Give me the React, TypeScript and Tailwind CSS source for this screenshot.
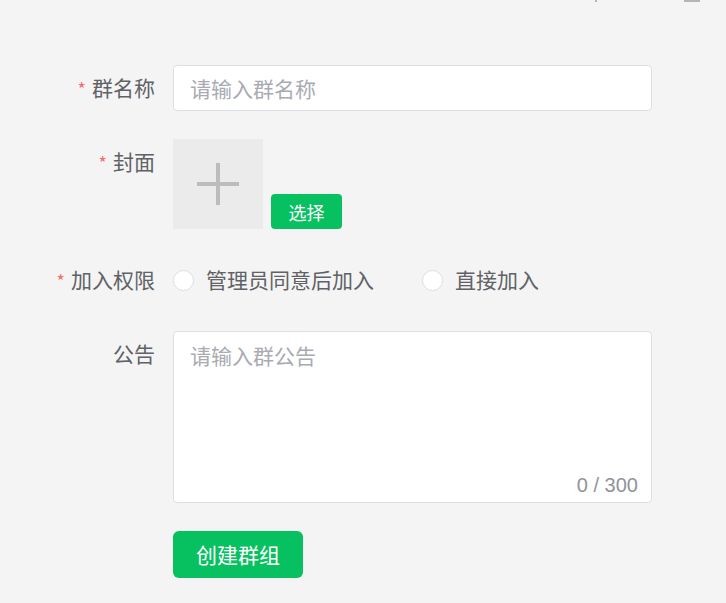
import { useState } from 'react';

const font = { fontFamily: '"Noto Sans CJK SC", "Liberation Sans", sans-serif' };

const Label = ({ text, required }: { text: string; required?: boolean }) => (
  <div className="w-[155px] shrink-0 h-[46px] flex items-center justify-end text-[21px] text-[#606266]">
    {required && <span className="text-[#f56c6c] mr-[6px] text-[18px]">*</span>}
    {text}
  </div>
);

export default function App() {
  const [name, setName] = useState('');
  const [notice, setNotice] = useState('');
  const [mode, setMode] = useState('');

  return (
    <div className="relative min-h-[603px] w-full bg-[#f4f4f4] pt-[65px]" style={font}>
      {/* cut-off header bits */}
      <div className="absolute top-0 left-[595px] w-[2px] h-[2px] bg-[#b5b5b5]" />
      <div className="absolute top-0 left-[684px] w-[16px] h-[2px] bg-[#b5b5b5]" />

      <div className="flex flex-col gap-[28px]">
        <div className="flex">
          <Label text="群名称" required />
          <input
            value={name}
            onChange={e => setName(e.target.value)}
            placeholder="请输入群名称"
            className="ml-[18px] w-[479px] h-[46px] rounded-[4px] border border-[#dcdfe6] bg-white px-[16px] text-[21px] text-[#606266] placeholder:text-[#a8abb2] outline-none"
          />
        </div>

        <div className="flex">
          <Label text="封面" required />
          <div className="ml-[18px] flex items-end gap-[8px]">
            <div className="w-[90px] h-[90px] bg-[#ebebeb] flex items-center justify-center">
              <svg width="42" height="42" viewBox="0 0 42 42">
                <rect x="0" y="19" width="42" height="4" fill="#bcbcbc" />
                <rect x="19" y="0" width="4" height="42" fill="#bcbcbc" />
              </svg>
            </div>
            <button className="w-[71px] h-[35px] rounded-[4px] bg-[#07c160] text-white text-[18px] leading-none">
              选择
            </button>
          </div>
        </div>

        <div className="flex">
          <Label text="加入权限" required />
          <div className="ml-[18px] flex items-center text-[21px] text-[#606266]">
            {['管理员同意后加入', '直接加入'].map((t, i) => (
              <label key={t} className={`flex items-center cursor-pointer ${i === 0 ? 'mr-[48px]' : ''}`} onClick={() => setMode(t)}>
                <span className="w-[21px] h-[21px] rounded-full border border-[#dcdfe6] bg-white flex items-center justify-center mr-[12px]">
                  {mode === t && <span className="w-[8px] h-[8px] rounded-full bg-[#07c160]" />}
                </span>
                {t}
              </label>
            ))}
          </div>
        </div>

        <div className="flex">
          <Label text="公告" />
          <div className="ml-[18px] relative w-[479px] h-[172px] rounded-[4px] border border-[#dcdfe6] bg-white">
            <textarea
              value={notice}
              maxLength={300}
              onChange={e => setNotice(e.target.value)}
              placeholder="请输入群公告"
              className="w-full h-full resize-none bg-transparent px-[16px] pt-[8px] text-[21px] text-[#606266] placeholder:text-[#a8abb2] outline-none"
            />
            <span className="absolute right-[13px] bottom-[2px] text-[20px] text-[#909399]" style={{ fontFamily: '"Liberation Sans", sans-serif' }}>
              {notice.length} / 300
            </span>
          </div>
        </div>

        <div className="flex">
          <div className="w-[155px] shrink-0" />
          <button className="ml-[18px] w-[130px] h-[47px] rounded-[6px] bg-[#07c160] text-white text-[21px]">
            创建群组
          </button>
        </div>
      </div>
    </div>
  );
}
